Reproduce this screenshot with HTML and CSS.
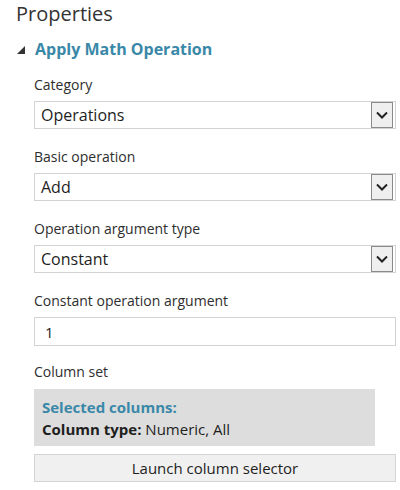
FILE: index.html
```html
<!DOCTYPE html>
<html lang="en">
<head>
<meta charset="utf-8">
<title>Properties</title>
<link rel="stylesheet" href="styles.css">
</head>
<body>
<div class="panel">
  <h1 class="title">Properties</h1>
  <h2 class="section">
    <svg class="caret" width="8" height="8" viewBox="0 0 8 8"><polygon points="8,0 8,8 0,8" fill="#333"/></svg>
    <span>Apply Math Operation</span>
  </h2>
  <div class="form">
    <div class="field">
      <div class="label">Category</div>
      <div class="select"><span class="value">Operations</span><span class="arrow"><svg width="12" height="8" viewBox="0 0 12 8"><polyline points="1,1.5 6,6.5 11,1.5" fill="none" stroke="#222" stroke-width="2"/></svg></span></div>
    </div>
    <div class="field">
      <div class="label">Basic operation</div>
      <div class="select"><span class="value">Add</span><span class="arrow"><svg width="12" height="8" viewBox="0 0 12 8"><polyline points="1,1.5 6,6.5 11,1.5" fill="none" stroke="#222" stroke-width="2"/></svg></span></div>
    </div>
    <div class="field">
      <div class="label">Operation argument type</div>
      <div class="select"><span class="value">Constant</span><span class="arrow"><svg width="12" height="8" viewBox="0 0 12 8"><polyline points="1,1.5 6,6.5 11,1.5" fill="none" stroke="#222" stroke-width="2"/></svg></span></div>
    </div>
    <div class="field field-input">
      <div class="label">Constant operation argument</div>
      <div class="input"><span class="value">1</span></div>
    </div>
    <div class="field">
      <div class="label">Column set</div>
      <div class="colbox">
        <div class="sel-title">Selected columns:</div>
        <div class="sel-line"><b>Column type:</b> Numeric, All</div>
      </div>
      <div class="button">Launch column selector</div>
    </div>
  </div>
</div>
</body>
</html>
```

FILE: styles.css
```css
html, body {
  margin: 0;
  padding: 0;
  background: #ffffff;
}
body {
  font-family: "Open Sans", "Noto Sans", sans-serif;
  color: #2a2a2a;
  width: 400px;
  height: 490px;
  overflow: hidden;
}
.panel {
  padding: 0 4px 0 15px;
}
.title {
  margin: 0 0 0 1px;
  font-size: 20px;
  line-height: 28px;
  font-weight: 400;
  color: #333;
}
.section {
  margin: 11px 0 0 0;
  display: flex;
  align-items: center;
  font-size: 16px;
  line-height: 20px;
  font-weight: 700;
  color: #3a88a8;
}
.caret {
  margin: 2px 10px 0 2px;
}
.form {
  padding-left: 19px;
  margin-top: 16px;
}
.field {
  margin-bottom: 18px;
}
.field-input {
  margin-bottom: 16px;
}
.label {
  font-size: 14px;
  line-height: 20px;
  color: #2e2e2e;
  margin-bottom: 6px;
}
.select, .input {
  box-sizing: border-box;
  height: 28px;
  width: 362px;
  border: 1px solid #d2d2d2;
  display: flex;
  align-items: center;
  justify-content: space-between;
  font-size: 16px;
  color: #1e1e1e;
}
.input {
  height: 29px;
}
.value {
  padding-left: 6px;
}
.input .value {
  padding-left: 10px;
  font-size: 15px;
}
.arrow {
  box-sizing: border-box;
  width: 22px;
  height: 26px;
  margin-right: 2px;
  border: 1px solid #8a8a8a;
  background: #efefef;
  display: flex;
  align-items: center;
  justify-content: center;
}
.colbox {
  box-sizing: border-box;
  width: 341px;
  height: 57px;
  margin-top: 7px;
  background: #dddddd;
  padding: 7px 8px 5px 8px;
  font-size: 15px;
  line-height: 22px;
  color: #1e1e1e;
}
.sel-title {
  font-weight: 700;
  color: #3a88a8;
}
.sel-line b {
  font-weight: 700;
}
.button {
  box-sizing: border-box;
  width: 362px;
  height: 28px;
  margin-top: 8px;
  background: #f0f0f0;
  border: 1px solid #d4d4d4;
  display: flex;
  align-items: center;
  justify-content: center;
  font-size: 15px;
  color: #1e1e1e;
}
```
